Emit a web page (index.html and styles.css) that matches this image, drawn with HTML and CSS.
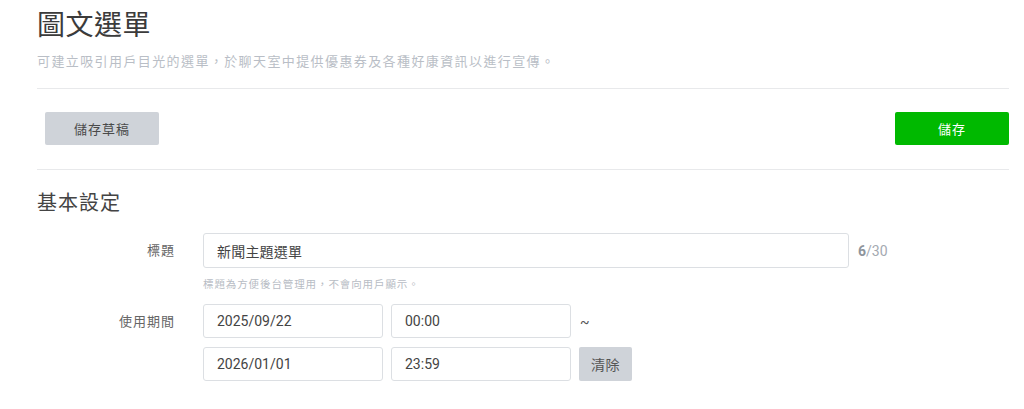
FILE: index.html
```html
<!DOCTYPE html>
<html lang="zh-Hant">
<head>
<meta charset="utf-8">
<title>圖文選單</title>
<link rel="stylesheet" href="styles.css">
</head>
<body>
<div class="page">
  <header class="page-head">
    <h1 class="page-title">圖文選單</h1>
    <p class="page-desc">可建立吸引用戶目光的選單，於聊天室中提供優惠券及各種好康資訊以進行宣傳。</p>
  </header>
  <div class="toolbar">
    <button class="btn btn-gray btn-wide">儲存草稿</button>
    <button class="btn btn-green btn-wide">儲存</button>
  </div>
  <section class="section">
    <h2 class="section-title">基本設定</h2>
    <div class="form-row">
      <div class="form-label label-title">標題</div>
      <div class="form-body">
        <div class="title-line">
          <div class="input input-title">新聞主題選單</div>
          <div class="counter"><b>6</b>/30</div>
        </div>
        <div class="hint">標題為方便後台管理用，不會向用戶顯示。</div>
      </div>
    </div>
    <div class="form-row form-row-period">
      <div class="form-label label-period">使用期間</div>
      <div class="form-body period">
        <div class="period-line">
          <div class="input input-date">2025/09/22</div>
          <div class="input input-date">00:00</div>
          <span class="tilde">~</span>
        </div>
        <div class="period-line">
          <div class="input input-date">2026/01/01</div>
          <div class="input input-date">23:59</div>
          <button class="btn btn-gray btn-clear">清除</button>
        </div>
      </div>
    </div>
  </section>
</div>
</body>
</html>
```

FILE: styles.css
```css
* { box-sizing: border-box; }
html, body { margin: 0; padding: 0; background: #fff; }
body {
  font-family: Roboto, "Noto Sans CJK TC", "Noto Sans", sans-serif;
  color: #444;
}
.page {
  padding: 8px 15px 0 37px;
}
.page-title {
  margin: 0;
  font-size: 28px;
  line-height: 36px;
  font-weight: 400;
  color: #3b3b3b;
  letter-spacing: 0.5px;
}
.page-desc {
  margin: 8px 0 0;
  font-size: 13px;
  line-height: 20px;
  color: #b9bec6;
  letter-spacing: 1.4px;
}
.page-head {
  border-bottom: 1px solid #e8e9eb;
  padding-bottom: 16px;
}
.toolbar {
  display: flex;
  justify-content: space-between;
  padding: 23px 0 24px 8px;
  border-bottom: 1px solid #e8e9eb;
}
.btn {
  font-family: inherit;
  border: 0;
  border-radius: 2px;
  font-size: 13px;
  letter-spacing: 1px;
  cursor: pointer;
  padding: 0;
}
.btn-wide {
  width: 114px;
  height: 33px;
}
.btn-gray {
  background: #cfd3d9;
  color: #4a4a4a;
}
.btn-green {
  background: #00b900;
  color: #fff;
}
.section-title {
  margin: 19px 0 0;
  font-size: 20px;
  line-height: 28px;
  font-weight: 400;
  color: #444;
  letter-spacing: 1px;
}
.form-row {
  display: grid;
  grid-template-columns: 166px 1fr;
  margin-top: 16px;
}
.form-row-period { margin-top: 11px; }
.form-label {
  text-align: right;
  padding-right: 28px;
  font-size: 13px;
  color: #666;
  letter-spacing: 1px;
}
.label-title { line-height: 35px; }
.label-period { line-height: 36px; }
.title-line {
  display: flex;
  align-items: center;
}
.input {
  border: 1px solid #dcdfe3;
  border-radius: 3px;
  background: #fff;
  font-size: 14px;
  color: #444;
  padding: 0 13px;
  display: flex;
  align-items: center;
}
.input-title {
  width: 646px;
  height: 35px;
  letter-spacing: 0.2px;
}
.counter {
  margin-left: 9px;
  font-size: 14px;
  color: #a4a9b1;
}
.counter b { color: #8e949c; }
.hint {
  margin-top: 9px;
  font-size: 10.5px;
  line-height: 16px;
  color: #b7bcc4;
  letter-spacing: 0.9px;
}
.period {
  display: flex;
  flex-direction: column;
  gap: 9px;
}
.period-line {
  display: flex;
  align-items: center;
  gap: 8px;
}
.input-date {
  width: 180px;
  height: 34px;
}
.tilde {
  font-size: 14px;
  color: #555;
  margin-left: 1px;
  padding-top: 2px;
}
.btn-clear {
  width: 53px;
  height: 34px;
  font-size: 14px;
  letter-spacing: 0.5px;
  color: #555;
}
```
